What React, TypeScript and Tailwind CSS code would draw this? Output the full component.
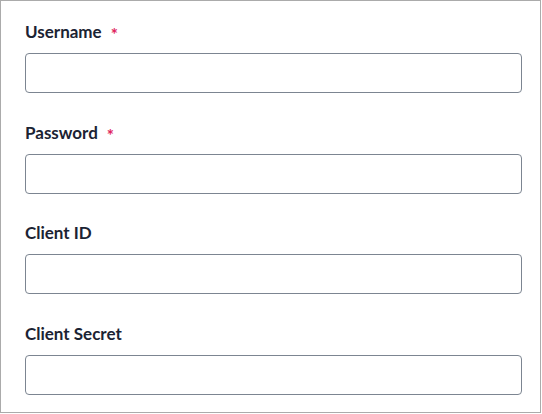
import React, { useState } from "react";

type Field = { id: string; label: string; required?: boolean; type?: string };

const fields: Field[] = [
  { id: "username", label: "Username", required: true },
  { id: "password", label: "Password", required: true, type: "password" },
  { id: "clientId", label: "Client ID" },
  { id: "clientSecret", label: "Client Secret" },
];

function App() {
  const [values, setValues] = useState<Record<string, string>>({});

  return (
    <div
      className="w-[541px] h-[413px] border border-[#ababab] bg-white pl-[24px] pr-[18px] pt-[20px]"
      style={{ fontFamily: 'Lato, "Liberation Sans", sans-serif' }}
    >
      <form className="flex flex-col gap-[28.5px]">
        {fields.map((f) => (
          <div key={f.id} className="flex flex-col gap-[12px]">
            <label
              htmlFor={f.id}
              className="h-[20px] leading-[22px] text-[17px] font-bold text-[#1b2333]"
            >
              {f.label}
              {f.required && (
                <span className="ml-[9px] align-[-3px] text-[#e0245e]">*</span>
              )}
            </label>
            <input
              id={f.id}
              type={f.type ?? "text"}
              className="w-[497px] h-[40px] rounded-[4px] border border-[#7c8591] bg-white px-3 outline-none"
              value={values[f.id] ?? ""}
              onChange={(e) => setValues({ ...values, [f.id]: e.target.value })}
            />
          </div>
        ))}
      </form>
    </div>
  );
}

export default App;
